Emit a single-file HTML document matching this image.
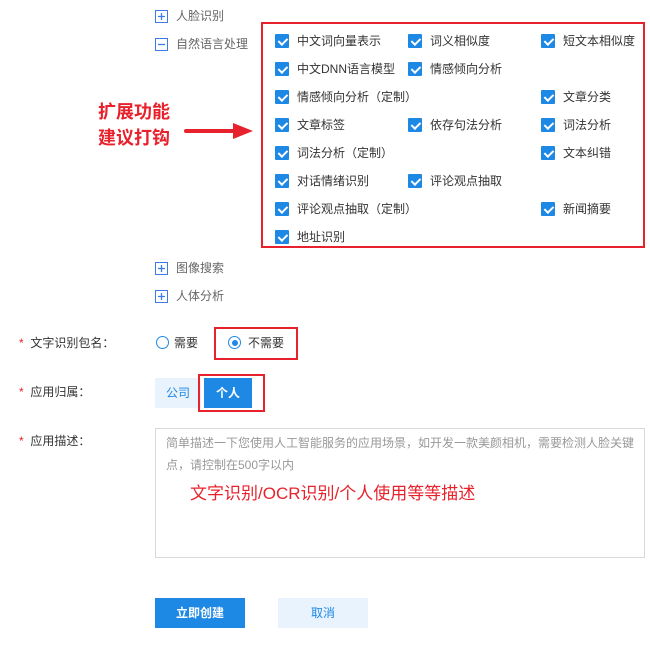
<!DOCTYPE html>
<html><head><meta charset="utf-8"><style>
*{margin:0;padding:0;box-sizing:border-box}
body{width:650px;height:647px;background:#fff;position:relative;overflow:hidden;font-family:"Liberation Sans","Noto Sans CJK SC",sans-serif;font-size:12px;color:#333}
.a{position:absolute;white-space:nowrap;line-height:16px}
.pb{position:absolute}
.g{color:#666}
.cb{position:absolute;width:14px;height:14px;background:#1e88e5;border-radius:1px}
.cb:after{content:"";position:absolute;left:4.5px;top:1.5px;width:3.5px;height:7px;border:solid #fff;border-width:0 2px 2px 0;transform:rotate(45deg)}
.red{position:absolute;border:2px solid #e8222c}
.star{color:#e8222c}
</style></head><body>
<svg class="pb" style="left:155px;top:10px" width="13" height="13"><rect x="0.5" y="0.5" width="12" height="12" fill="none" stroke="#3b7ae8"/><path d="M3 6.5H10M6.5 3V10" stroke="#3b7ae8" stroke-width="1.3"/></svg><div class="a g" style="left:176px;top:8px">人脸识别</div>
<svg class="pb" style="left:155px;top:38px" width="13" height="13"><rect x="0.5" y="0.5" width="12" height="12" fill="none" stroke="#3b7ae8"/><path d="M3 6.5H10" stroke="#3b7ae8" stroke-width="1.3"/></svg><div class="a g" style="left:176px;top:36px">自然语言处理</div>

<div class="red" style="left:261px;top:22px;width:384px;height:226px"></div>

<div class="cb" style="left:275px;top:34px"></div><div class="a" style="left:297px;top:33px">中文词向量表示</div>
<div class="cb" style="left:408px;top:34px"></div><div class="a" style="left:430px;top:33px">词义相似度</div>
<div class="cb" style="left:541px;top:34px"></div><div class="a" style="left:563px;top:33px">短文本相似度</div>

<div class="cb" style="left:275px;top:62px"></div><div class="a" style="left:297px;top:61px">中文DNN语言模型</div>
<div class="cb" style="left:408px;top:62px"></div><div class="a" style="left:430px;top:61px">情感倾向分析</div>

<div class="cb" style="left:275px;top:90px"></div><div class="a" style="left:297px;top:89px">情感倾向分析（定制）</div>
<div class="cb" style="left:541px;top:90px"></div><div class="a" style="left:563px;top:89px">文章分类</div>

<div class="cb" style="left:275px;top:118px"></div><div class="a" style="left:297px;top:117px">文章标签</div>
<div class="cb" style="left:408px;top:118px"></div><div class="a" style="left:430px;top:117px">依存句法分析</div>
<div class="cb" style="left:541px;top:118px"></div><div class="a" style="left:563px;top:117px">词法分析</div>

<div class="cb" style="left:275px;top:146px"></div><div class="a" style="left:297px;top:145px">词法分析（定制）</div>
<div class="cb" style="left:541px;top:146px"></div><div class="a" style="left:563px;top:145px">文本纠错</div>

<div class="cb" style="left:275px;top:174px"></div><div class="a" style="left:297px;top:173px">对话情绪识别</div>
<div class="cb" style="left:408px;top:174px"></div><div class="a" style="left:430px;top:173px">评论观点抽取</div>

<div class="cb" style="left:275px;top:202px"></div><div class="a" style="left:297px;top:201px">评论观点抽取（定制）</div>
<div class="cb" style="left:541px;top:202px"></div><div class="a" style="left:563px;top:201px">新闻摘要</div>

<div class="cb" style="left:275px;top:230px"></div><div class="a" style="left:297px;top:229px">地址识别</div>

<div class="a" style="left:98px;top:99px;font-size:18px;line-height:26px;font-weight:bold;color:#e8222c">扩展功能<br>建议打钩</div>
<svg style="position:absolute;left:183px;top:120px" width="72" height="22"><line x1="3" y1="11" x2="52" y2="11" stroke="#e8222c" stroke-width="4" stroke-linecap="round"/><polygon points="50,3 70,11 50,19" fill="#e8222c"/></svg>

<svg class="pb" style="left:155px;top:262px" width="13" height="13"><rect x="0.5" y="0.5" width="12" height="12" fill="none" stroke="#3b7ae8"/><path d="M3 6.5H10M6.5 3V10" stroke="#3b7ae8" stroke-width="1.3"/></svg><div class="a g" style="left:176px;top:260px">图像搜索</div>
<svg class="pb" style="left:155px;top:290px" width="13" height="13"><rect x="0.5" y="0.5" width="12" height="12" fill="none" stroke="#3b7ae8"/><path d="M3 6.5H10M6.5 3V10" stroke="#3b7ae8" stroke-width="1.3"/></svg><div class="a g" style="left:176px;top:288px">人体分析</div>

<div class="a" style="left:19px;top:335px"><span class="star">*</span>&nbsp; 文字识别包名：</div>
<div style="position:absolute;left:156px;top:336px;width:13px;height:13px;border:1px solid #1e88e5;border-radius:50%"></div>
<div class="a" style="left:174px;top:335px">需要</div>
<div style="position:absolute;left:228px;top:336px;width:13px;height:13px;border:1px solid #1e88e5;border-radius:50%"><div style="position:absolute;left:2.5px;top:2.5px;width:6px;height:6px;background:#1e88e5;border-radius:50%"></div></div>
<div class="a" style="left:248px;top:335px">不需要</div>
<div class="red" style="left:214px;top:327px;width:84px;height:33px"></div>

<div class="a" style="left:19px;top:384px"><span class="star">*</span>&nbsp; 应用归属：</div>
<div style="position:absolute;left:155px;top:378px;width:46px;height:30px;background:#e8f3fd;color:#1e88e5;text-align:center;line-height:30px">公司</div>
<div style="position:absolute;left:204px;top:378px;width:48px;height:30px;background:#1e88e5;color:#fff;text-align:center;line-height:30px;font-weight:bold">个人</div>
<div class="red" style="left:198px;top:374px;width:67px;height:38px"></div>

<div class="a" style="left:19px;top:433px"><span class="star">*</span>&nbsp; 应用描述：</div>
<div style="position:absolute;left:155px;top:428px;width:490px;height:130px;border:1px solid #d9d9d9"></div>
<div class="a" style="left:166px;top:432px;color:#999;line-height:22px">简单描述一下您使用人工智能服务的应用场景，如开发一款美颜相机，需要检测人脸关键<br>点，请控制在500字以内</div>
<div class="a" style="left:190px;top:483px;font-size:17px;line-height:22px;color:#e8222c">文字识别/OCR识别/个人使用等等描述</div>

<div style="position:absolute;left:155px;top:598px;width:90px;height:30px;background:#1e88e5;color:#fff;text-align:center;line-height:30px;font-weight:bold">立即创建</div>
<div style="position:absolute;left:278px;top:598px;width:90px;height:30px;background:#e8f3fd;color:#1e88e5;text-align:center;line-height:30px">取消</div>
</body></html>
